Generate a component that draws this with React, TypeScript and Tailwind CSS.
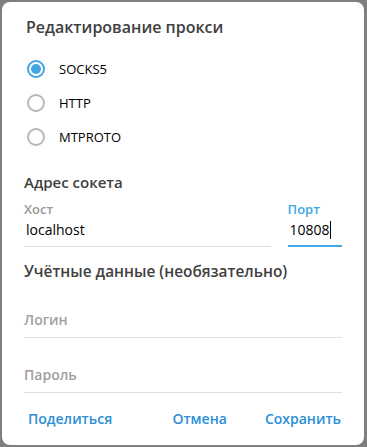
export default function App() {
  const radios = [
    { label: 'SOCKS5', checked: true },
    { label: 'HTTP', checked: false },
    { label: 'MTPROTO', checked: false },
  ];

  return (
    <div className="h-[447px] w-[367px] bg-[#7f7f7f] pl-[2px] pt-[2px] font-['Open_Sans',sans-serif]">
      <div className="flex h-[443px] w-[362px] flex-col rounded-lg bg-white px-[22px]">
        {/* Title */}
        <h1 className="mt-[13px] pl-[2px] text-[16px] font-semibold leading-[24px] text-[#404040]">
          Редактирование прокси
        </h1>

        {/* Proxy type */}
        <div className="mt-[21px] flex flex-col gap-[16px]">
          {radios.map((r) => (
            <div key={r.label} className="flex items-center gap-[14px] pl-[3px]">
              <span
                className={
                  r.checked
                    ? 'flex size-[18px] items-center justify-center rounded-full border-2 border-[#40a7e3]'
                    : 'flex size-[18px] items-center justify-center rounded-full border-2 border-[#b7b7b7]'
                }
              >
                {r.checked && <span className="size-[10px] rounded-full bg-[#40a7e3]" />}
              </span>
              <span className="text-[13px] leading-[18px] text-black">{r.label}</span>
            </div>
          ))}
        </div>

        {/* Socket address */}
        <h2 className="mt-[26px] text-[15px] font-semibold leading-[20px] text-[#404040]">Адрес сокета</h2>
        <div className="mt-[9px] flex gap-[17px]">
          <div className="flex w-[249px] flex-col">
            <span className="text-[13px] font-semibold leading-[16px] text-[#999999]">Хост</span>
            <span className="mt-[3px] pl-[2px] text-[14px] leading-[20px] text-black">localhost</span>
            <div className="mt-[6px] h-px bg-[#e0e0e0]" />
          </div>
          <div className="flex w-[55px] flex-col">
            <span className="text-[13px] font-semibold leading-[16px] text-[#40a7e3]">Порт</span>
            <span className="mt-[3px] flex items-center pl-[2px] text-[14px] leading-[20px] text-black">
              10808
              <span className="h-[18px] w-px bg-black" />
            </span>
            <div className="mt-[5px] h-[2px] bg-[#40a7e3]" />
          </div>
        </div>

        {/* Credentials */}
        <h2 className="mt-[15px] text-[15.4px] font-semibold leading-[20px] text-[#404040]">
          Учётные данные (необязательно)
        </h2>
        <div className="mt-[28px] flex flex-col">
          <span className="text-[14px] font-semibold leading-[20px] text-[#a0a0a0]">Логин</span>
          <div className="mt-[7px] h-px bg-[#e0e0e0]" />
        </div>
        <div className="mt-[27px] flex flex-col">
          <span className="text-[14px] font-semibold leading-[20px] text-[#a0a0a0]">Пароль</span>
          <div className="mt-[7px] h-px bg-[#e0e0e0]" />
        </div>

        {/* Buttons */}
        <div className="mt-[16px] flex items-center text-[14px] font-semibold leading-[20px] text-[#2a8fd6]">
          <span className="pl-[4px]">Поделиться</span>
          <span className="ml-auto">Отмена</span>
          <span className="ml-[38px] mr-[1px]">Сохранить</span>
        </div>
      </div>
    </div>
  );
}
